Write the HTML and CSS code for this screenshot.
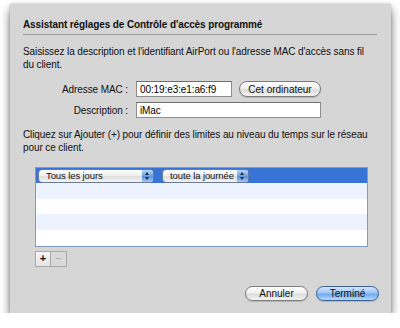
FILE: index.html
```html
<!DOCTYPE html>
<html lang="fr">
<head>
  <meta charset="UTF-8" />
  <title>Contrôle d'accès programmé</title>
  <link rel="stylesheet" href="styles.css">
</head>
<body>
  <div class="sheet">
    <div class="title">Assistant réglages de Contrôle d'accès programmé</div>
    <p class="intro">Saisissez la description et l'identifiant AirPort ou l'adresse MAC d'accès sans fil du&nbsp;client.</p>

    <div class="form">
      <div class="row">
        <label>Adresse MAC :</label>
        <input type="text" class="mac" value="00:19:e3:e1:a6:f9" />
        <button class="pill small">Cet ordinateur</button>
      </div>
      <div class="row">
        <label>Description :</label>
        <input type="text" class="desc" value="iMac" />
      </div>
    </div>

    <p class="intro second">Cliquez sur Ajouter (+) pour définir des limites au niveau du temps sur le réseau pour ce client.</p>

    <div class="table">
      <div class="trow selected">
        <div class="popup days">Tous les jours<span class="arrows"></span></div>
        <div class="popup time">toute la journée<span class="arrows"></span></div>
      </div>
      <div class="trow alt"></div>
      <div class="trow"></div>
      <div class="trow alt"></div>
      <div class="trow"></div>
    </div>

    <div class="addremove">
      <button class="plus">+</button><button class="minus">−</button>
    </div>

    <div class="actions">
      <button class="pill">Annuler</button>
      <button class="pill default">Terminé</button>
    </div>
  </div>
</body>
</html>
```

FILE: styles.css
```css
body {
  margin: 0;
  background: #ffffff;
  font-family: "Liberation Sans", Arial, sans-serif;
  font-size: 10px;
  letter-spacing: -0.1px;
  color: #111;
}
.sheet {
  width: 381px;
  height: 309px;
  margin: 4px 0 0 10px;
  box-sizing: border-box;
  padding: 15px 13px 0 13px;
  background: #d6d6d6;
  box-shadow: 0 6px 9px rgba(0, 0, 0, 0.55), 0 0 3px rgba(0, 0, 0, 0.2);
}
.title {
  font-weight: bold;
  line-height: 12px;
  padding-bottom: 3px;
  border-bottom: 1px solid #9c9c9c;
  margin-right: 1px;
}
.intro {
  margin: 10px 0 0 0;
  line-height: 13px;
}
.intro.second {
  margin-top: 10px;
}
.form {
  margin-top: 10px;
}
.row {
  display: flex;
  align-items: center;
  height: 16px;
  margin-bottom: 5px;
}
.row:last-child {
  margin-bottom: 0;
}
.row label {
  width: 105px;
  text-align: right;
  margin-right: 8px;
}
input {
  font-family: "Liberation Sans", Arial, sans-serif;
  font-size: 10px;
  letter-spacing: -0.1px;
  height: 16px;
  box-sizing: border-box;
  border: 1px solid #8d8d8d;
  border-top-color: #6e6e6e;
  background: #fff;
  padding: 0 3px;
  margin: 0;
}
.mac {
  width: 96px;
}
.desc {
  width: 185px;
}
.pill {
  font-family: "Liberation Sans", Arial, sans-serif;
  font-size: 10px;
  height: 16px;
  padding: 0 10px;
  border: 1px solid #7a7a7a;
  border-radius: 9px;
  background: linear-gradient(to bottom, #ffffff, #f0f0f0 45%, #dcdcdc 55%, #f4f4f4);
  color: #111;
  box-shadow: 0 1px 1px rgba(0, 0, 0, 0.15);
}
.small {
  margin-left: 7px;
  width: 82px;
  padding: 0;
}
.table {
  margin: 13px 0 0 12px;
  width: 331px;
  border: 1px solid #7f9bbd;
  background: #fff;
}
.trow {
  height: 15.5px;
}
.trow.alt {
  background: #edf3fe;
}
.trow:last-child {
  height: 16px;
}
.trow.selected {
  height: 15px;
  background: #3874d6;
  display: flex;
  align-items: center;
  padding-left: 2px;
  gap: 8px;
}
.popup {
  position: relative;
  height: 14px;
  line-height: 12px;
  box-sizing: border-box;
  padding-left: 7px;
  font-size: 9.5px;
  border: 1px solid #6d7b92;
  border-radius: 4px;
  background: linear-gradient(to bottom, #ffffff, #ececec 50%, #dedede 55%, #f4f4f4);
}
.days {
  width: 116px;
}
.time {
  width: 87px;
}
.arrows {
  position: absolute;
  right: 0;
  top: 0;
  bottom: 0;
  width: 11px;
  border-radius: 0 3px 3px 0;
  background: linear-gradient(to bottom, #b9d3f5, #6ea2e6 50%, #5a92e0 55%, #a6c7f2);
}
.arrows::before,
.arrows::after {
  content: "";
  position: absolute;
  left: 3px;
  border-left: 2px solid transparent;
  border-right: 2px solid transparent;
}
.arrows::before {
  top: 2px;
  border-bottom: 3px solid #1d2f4a;
}
.arrows::after {
  bottom: 2px;
  border-top: 3px solid #1d2f4a;
}
.addremove {
  display: flex;
  margin: 4px 0 0 12px;
}
.addremove button {
  width: 16px;
  height: 16px;
  padding: 0;
  border: 1px solid #a9a9a9;
  background: linear-gradient(to bottom, #f7f7f7, #e4e4e4);
  font-family: "Liberation Sans", Arial, sans-serif;
  font-size: 11px;
  font-weight: bold;
  line-height: 13px;
  color: #111;
}
.addremove .minus {
  border-left: none;
  color: #a8a8a8;
  font-weight: normal;
  background: #d9d9d9;
}
.actions {
  display: flex;
  justify-content: flex-end;
  gap: 8px;
  margin: 19px -1px 0 0;
}
.actions .pill {
  width: 63px;
  height: 15px;
  padding: 0;
}
.actions .default {
  border-color: #3c5f91;
  background: linear-gradient(to bottom, #d5e7fd, #9cc6f7 45%, #6eaaf3 55%, #b6dafe);
}
```
